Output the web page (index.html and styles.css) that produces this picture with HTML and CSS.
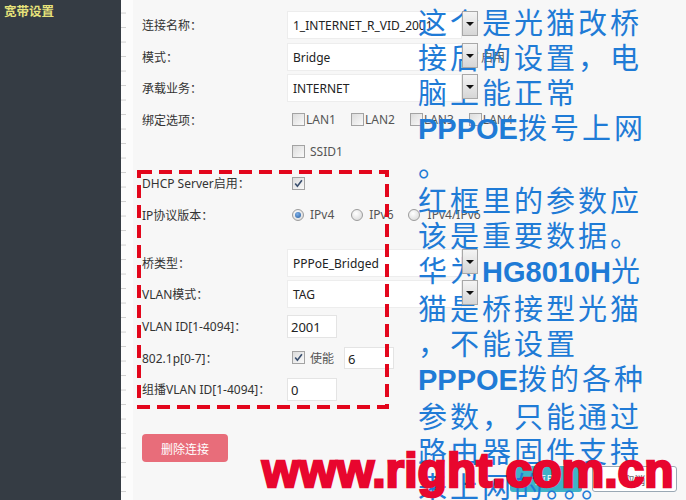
FILE: index.html
```html
<!DOCTYPE html>
<html lang="zh-CN">
<head>
<meta charset="utf-8">
<title>宽带设置</title>
<link rel="stylesheet" href="styles.css">
</head>
<body>
<div class="page">
  <aside class="sidebar">
    <div class="side-title">宽带设置</div>
  </aside>
  <div class="ticks"></div>
  <main class="main">
    <div class="form">
      <div class="row">
        <span class="label">连接名称：</span>
        <div class="select"><span class="sel-text">1_INTERNET_R_VID_2001</span><span class="sel-arrow"></span></div>
      </div>
      <div class="row">
        <span class="label">模式：</span>
        <div class="select"><span class="sel-text">Bridge</span><span class="sel-arrow"></span></div>
        <span class="after-sel">启用</span>
      </div>
      <div class="row">
        <span class="label">承载业务：</span>
        <div class="select"><span class="sel-text">INTERNET</span><span class="sel-arrow"></span></div>
      </div>
      <div class="row">
        <span class="label">绑定选项：</span>
        <div class="opts">
          <span class="opt"><span class="cb"></span><span class="opt-text">LAN1</span></span>
          <span class="opt"><span class="cb"></span><span class="opt-text">LAN2</span></span>
          <span class="opt"><span class="cb"></span><span class="opt-text">LAN3</span></span>
          <span class="opt"><span class="cb"></span><span class="opt-text">LAN4</span></span>
        </div>
      </div>
      <div class="row">
        <span class="label"></span>
        <div class="opts">
          <span class="opt wide"><span class="cb"></span><span class="opt-text">SSID1</span></span>
        </div>
      </div>
      <div class="row">
        <span class="label">DHCP Server启用：</span>
        <div class="opts">
          <span class="cb checked"><svg viewBox="0 0 11 11" width="11" height="11"><path d="M2.2 5.6 L4.4 8.3 L8.9 2.2" fill="none" stroke="#3a4f6e" stroke-width="1.6"/></svg></span>
        </div>
      </div>
      <div class="row radio-row">
        <span class="label">IP协议版本：</span>
        <div class="opts">
          <span class="opt r1"><span class="radio checked"></span><span class="opt-text">IPv4</span></span>
          <span class="opt r2"><span class="radio"></span><span class="opt-text">IPv6</span></span>
          <span class="opt r3"><span class="radio"></span><span class="opt-text">IPv4/IPv6</span></span>
        </div>
      </div>
      <div class="row">
        <span class="label">桥类型：</span>
        <div class="select"><span class="sel-text">PPPoE_Bridged</span><span class="sel-arrow"></span></div>
      </div>
      <div class="row">
        <span class="label">VLAN模式：</span>
        <div class="select"><span class="sel-text">TAG</span><span class="sel-arrow"></span></div>
      </div>
      <div class="row">
        <span class="label">VLAN ID[1-4094]：</span>
        <span class="input">2001</span>
      </div>
      <div class="row">
        <span class="label">802.1p[0-7]：</span>
        <div class="opts">
          <span class="opt wide"><span class="cb checked"><svg viewBox="0 0 11 11" width="11" height="11"><path d="M2.2 5.6 L4.4 8.3 L8.9 2.2" fill="none" stroke="#3a4f6e" stroke-width="1.6"/></svg></span><span class="opt-text">使能</span></span>
          <span class="input small">6</span>
        </div>
      </div>
      <div class="row">
        <span class="label">组播VLAN ID[1-4094]：</span>
        <span class="input">0</span>
      </div>
    </div>
    <div class="actions">
      <button class="btn-del" type="button">删除连接</button>
    </div>
    <div class="footer-btns">
      <span class="btn-apply">应用</span>
      <span class="btn-cancel">取消</span>
    </div>

    <svg class="redbox" width="252" height="239" viewBox="0 0 252 239">
      <rect x="2" y="2" width="248" height="235" fill="none" stroke="#e3061c" stroke-width="4" stroke-dasharray="13 7"/>
    </svg>
  </main>
</div>

<div class="note">
  <div>这个是光猫改桥</div>
  <div>接后的设置，电</div>
  <div>脑上能正常</div>
  <div><span class="en">PPPOE</span>拨号上网</div>
  <div>。</div>
  <div>红框里的参数应</div>
  <div>该是重要数据。</div>
  <div>华为<span class="en">HG8010H</span>光</div>
  <div>猫是桥接型光猫</div>
  <div>，不能设置</div>
  <div><span class="en">PPPOE</span>拨的各种</div>
  <div>参数，只能通过</div>
  <div>路由器固件支持</div>
  <div>来上网的。。。</div>
</div>

<div class="watermark">www.right.com.cn</div>
</body>
</html>
```

FILE: styles.css
```css
* { box-sizing: border-box; }

html, body {
  margin: 0;
  padding: 0;
  width: 686px;
  height: 500px;
  overflow: hidden;
  background: #f7f7f7;
  font-family: "Noto Sans", "Noto Sans CJK SC", sans-serif;
}

.page {
  display: flex;
  height: 500px;
}

.sidebar {
  width: 121px;
  background: #353c44;
  flex: none;
}

.side-title {
  padding: 2px 0 0 4px;
  font-family: "Noto Sans CJK SC", sans-serif;
  font-size: 12.5px;
  font-weight: 700;
  line-height: 17px;
  color: #e6e27a;
}

.ticks {
  width: 12px;
  flex: none;
  background-color: #fcfcfc;
  background-image: repeating-linear-gradient(to bottom, transparent 0, transparent 13px, #cfcfcf 13px, #cfcfcf 14px);
  background-size: 5px 14.5px;
  background-repeat: repeat-y;
}

.main {
  flex: 1;
  position: relative;
  padding: 9px 0 0 9px;
  background: #f7f7f7;
}

.form {
  display: flex;
  flex-direction: column;
}

.row {
  display: flex;
  align-items: center;
  height: 31.7px;
  font-size: 12px;
  color: #333;
}

.radio-row { margin-bottom: 16px; }

.label {
  width: 145px;
  flex: none;
  font-family: "Noto Sans", "Noto Sans CJK SC", sans-serif;
  font-size: 12px;
  color: #333;
  white-space: nowrap;
}

.select {
  display: flex;
  align-items: center;
  width: 191px;
  height: 28px;
}

.sel-text {
  flex: 1;
  height: 28px;
  line-height: 27px;
  padding-left: 5px;
  background: #fff;
  border: 1px solid #ededed;
  font-size: 12px;
  color: #222;
  white-space: nowrap;
  overflow: hidden;
}

.sel-arrow {
  position: relative;
  z-index: 3;
  width: 16px;
  height: 25px;
  flex: none;
  align-self: flex-start;
  border: 1px solid #a8a8a8;
  background: linear-gradient(to bottom, #f4f4f4, #d6d6d6);
  display: flex;
  justify-content: center;
  padding-top: 10px;
}

.sel-arrow::after {
  content: "";
  width: 0;
  height: 0;
  border-left: 4px solid transparent;
  border-right: 4px solid transparent;
  border-top: 4px solid #111;
}

.after-sel {
  margin-left: 3px;
  font-size: 12px;
  color: #555;
}

.opts {
  display: flex;
  align-items: center;
  padding-left: 5px;
}

.opt {
  display: flex;
  align-items: center;
  margin-right: 15px;
}

.opt.wide .opt-text { margin-left: 5px; }

.opt-text {
  margin-left: 1px;
  font-size: 12px;
  color: #555;
}

.cb {
  width: 13px;
  height: 13px;
  flex: none;
  border: 1px solid #a3a3a3;
  background: linear-gradient(135deg, #dcdcdc, #fafafa);
  display: flex;
  align-items: center;
  justify-content: center;
}

.radio {
  width: 12px;
  height: 12px;
  flex: none;
  border-radius: 50%;
  border: 1px solid #9c9c9c;
  background: radial-gradient(circle at 40% 35%, #ffffff, #d4d4d4);
  display: flex;
  align-items: center;
  justify-content: center;
  margin-right: 5px;
}

.radio.checked::after {
  content: "";
  width: 6px;
  height: 6px;
  border-radius: 50%;
  background: radial-gradient(circle at 40% 35%, #7fb0e8, #245c9e);
}

.r1 { margin-right: 17px; }
.r2 { margin-right: 14px; }
.r3 .radio { margin-right: 7px; }

.input {
  display: inline-block;
  width: 50px;
  height: 23px;
  line-height: 22px;
  padding-left: 3px;
  background: #fff;
  border: 1px solid #e4e4e4;
  font-size: 13px;
  color: #222;
}

.input.small {
  margin-left: -5px;
  height: 22px;
}

.actions {
  padding-top: 29px;
}

.btn-del {
  width: 86px;
  height: 28px;
  border: none;
  border-radius: 4px;
  background: #e86d7a;
  color: #fff;
  font-family: "Noto Sans CJK SC", sans-serif;
  font-size: 12px;
  padding: 0;
}

.footer-btns {
  display: flex;
  gap: 10px;
  margin-top: 4px;
  padding-left: 368px;
}

.btn-apply, .btn-cancel {
  height: 26px;
  line-height: 26px;
  border-radius: 3px;
  font-size: 11px;
  text-align: center;
  font-family: "Noto Sans CJK SC", sans-serif;
}

.btn-apply {
  width: 72px;
  background: #3fb3c8;
  color: #fff;
}

.btn-cancel {
  width: 85px;
  background: #fff;
  border: 1px solid #9aa8b4;
  color: #666;
}

.redbox {
  position: absolute;
  left: 4px;
  top: 170px;
  z-index: 1;
}

.note {
  position: absolute;
  left: 418px;
  top: 4px;
  z-index: 2;
  font-family: "Noto Sans CJK SC", sans-serif;
  font-size: 29px;
  line-height: 35px;
  letter-spacing: 3px;
  color: #1f7bd6;
  white-space: nowrap;
}

.note .en {
  font-family: "Liberation Sans", sans-serif;
  font-weight: 700;
  letter-spacing: 0;
}

.watermark {
  position: absolute;
  left: 262px;
  top: 447px;
  z-index: 4;
  font-family: "Liberation Sans", sans-serif;
  font-weight: 700;
  font-size: 48px;
  line-height: 48px;
  color: #e8062e;
  -webkit-text-stroke: 2.5px #e8062e;
  white-space: nowrap;
}
```
